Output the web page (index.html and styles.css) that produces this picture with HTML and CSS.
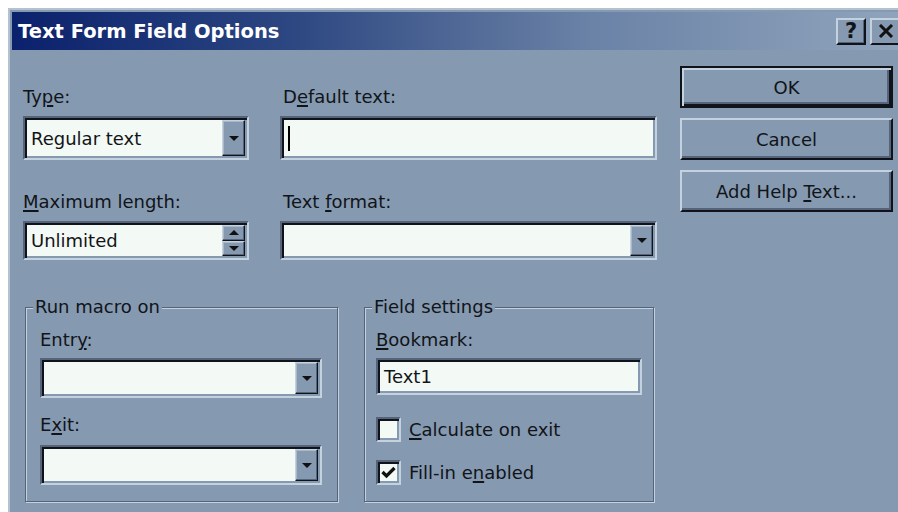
FILE: index.html
```html
<!DOCTYPE html>
<html lang="en">
<head>
<meta charset="utf-8">
<title>Text Form Field Options</title>
<link rel="stylesheet" href="styles.css">
</head>
<body>
<div class="dialog">
  <div class="titlebar">
    <span class="title">Text Form Field Options</span>
    <div class="caption-btns">
      <span class="cap-btn">?</span>
      <span class="cap-btn close">
        <svg width="16" height="14" viewBox="0 0 16 14"><path d="M2 1 L14 13 M14 1 L2 13" stroke="#111" stroke-width="3" fill="none"/></svg>
      </span>
    </div>
  </div>

  <div class="client">
    <div class="main">
      <div class="fields">
        <div class="field">
          <label class="lbl">Ty<u>p</u>e:</label>
          <div class="sunken row1">
            <span class="value">Regular text</span>
            <span class="drop-btn"><svg width="10" height="5" viewBox="0 0 10 5"><path d="M0 0 H10 L5 5 Z" fill="#111"/></svg></span>
          </div>
        </div>
        <div class="field">
          <label class="lbl shift">D<u>e</u>fault text:</label>
          <div class="sunken row1"><span class="caret"></span></div>
        </div>
        <div class="field">
          <label class="lbl"><u>M</u>aximum length:</label>
          <div class="sunken row2">
            <span class="value">Unlimited</span>
            <span class="spin">
              <span class="spin-half"><svg width="10" height="5" viewBox="0 0 10 5"><path d="M0 5 H10 L5 0 Z" fill="#111"/></svg></span>
              <span class="spin-half"><svg width="10" height="5" viewBox="0 0 10 5"><path d="M0 0 H10 L5 5 Z" fill="#111"/></svg></span>
            </span>
          </div>
        </div>
        <div class="field">
          <label class="lbl shift">Text <u>f</u>ormat:</label>
          <div class="sunken row2">
            <span class="value"></span>
            <span class="drop-btn"><svg width="10" height="5" viewBox="0 0 10 5"><path d="M0 0 H10 L5 5 Z" fill="#111"/></svg></span>
          </div>
        </div>
      </div>

      <div class="groups">
        <fieldset class="group macro">
          <legend>Run macro on</legend>
          <label class="lbl">Entr<u>y</u>:</label>
          <div class="sunken combo-g gap-s">
            <span class="value"></span>
            <span class="drop-btn"><svg width="10" height="5" viewBox="0 0 10 5"><path d="M0 0 H10 L5 5 Z" fill="#111"/></svg></span>
          </div>
          <label class="lbl gap-m">E<u>x</u>it:</label>
          <div class="sunken combo-g gap-x">
            <span class="value"></span>
            <span class="drop-btn"><svg width="10" height="5" viewBox="0 0 10 5"><path d="M0 0 H10 L5 5 Z" fill="#111"/></svg></span>
          </div>
        </fieldset>

        <fieldset class="group settings">
          <legend>Field settings</legend>
          <label class="lbl"><u>B</u>ookmark:</label>
          <div class="sunken edit-g gap-s"><span class="value">Text1</span></div>
          <div class="check-row gap-c1">
            <span class="sunken check"></span>
            <span><u>C</u>alculate on exit</span>
          </div>
          <div class="check-row gap-c2">
            <span class="sunken check">
              <svg width="15" height="13" viewBox="0 0 15 13"><path d="M1.5 6 L5.5 10 L13.5 2" stroke="#111" stroke-width="3.2" fill="none"/></svg>
            </span>
            <span>Fill-in e<u>n</u>abled</span>
          </div>
        </fieldset>
      </div>
    </div>

    <div class="buttons">
      <button class="btn default">OK</button>
      <button class="btn">Cancel</button>
      <button class="btn">Add Help <u>T</u>ext...</button>
    </div>
  </div>
</div>
</body>
</html>
```
FILE: styles.css
```css
:root {
  --face: #8599b1;
  --hi: #c4d1de;
  --light: #a9b8c8;
  --shadow: #55647a;
  --dkdk: #10141a;
  --field: #f3f9f4;
  --ink: #111418;
}

* { box-sizing: border-box; }

html, body {
  margin: 0;
  height: 100%;
  overflow: hidden;
  background: #fff;
}

body {
  font-family: "DejaVu Sans", Verdana, sans-serif;
  font-size: 18px;
  color: var(--ink);
}

u {
  text-decoration-thickness: 1.5px;
  text-underline-offset: 2px;
}

/* window frame */
.dialog {
  margin: 8px 0 0 8px;
  width: 890px;
  height: 504px;
  overflow: hidden;
  background: var(--face);
  border-top: 2px solid #b3c1d0;
  border-left: 2px solid #b3c1d0;
  padding: 2px 0 0 2px;
}

.titlebar {
  height: 38px;
  display: flex;
  align-items: center;
  padding: 0 0 0 6px;
  background: linear-gradient(90deg, #0b216c 0%, #2a4580 30%, #6a82a6 65%, #8fa4bc 100%);
}

.title {
  color: #fff;
  font-weight: bold;
  font-size: 19.5px;
}

.caption-btns {
  margin-left: auto;
  display: flex;
  gap: 4px;
}

.cap-btn {
  width: 30px;
  height: 27px;
  display: flex;
  align-items: center;
  justify-content: center;
  background: var(--face);
  border: 2px solid;
  border-color: var(--hi) var(--dkdk) var(--dkdk) var(--hi);
  box-shadow: inset -1px -1px 0 var(--shadow);
  font-weight: bold;
  font-size: 21px;
  color: var(--ink);
}

.cap-btn.close {
  width: 28px;
  border-right: none;
  box-shadow: none;
  padding-left: 2px;
}

/* client area */
.client {
  display: flex;
  gap: 23px;
  padding: 16px 0 0 11px;
}

.main {
  width: 634px;
  padding-top: 20px;
}

.fields {
  display: grid;
  grid-template-columns: 226px 377px;
  column-gap: 31px;
  row-gap: 31px;
}

.field {
  display: flex;
  flex-direction: column;
  gap: 8px;
}

.lbl {
  display: block;
  height: 22px;
  line-height: 22px;
  white-space: nowrap;
}

.lbl.shift { padding-left: 3px; }

/* sunken edit / combo boxes */
.sunken {
  background: var(--field);
  border: 2px solid;
  border-color: var(--shadow) var(--hi) var(--hi) var(--shadow);
  box-shadow: inset 2px 2px 0 var(--dkdk), inset -2px -2px 0 var(--face);
  padding: 2px;
  display: flex;
  align-items: stretch;
}

.row1 { height: 44px; }
.row2 { height: 39px; }

.value {
  flex: 1;
  display: flex;
  align-items: center;
  padding-left: 4px;
  white-space: nowrap;
}

.caret {
  width: 2px;
  height: 25px;
  background: #000;
  margin-left: 4px;
  align-self: center;
}

.drop-btn,
.spin-half {
  width: 23px;
  flex: none;
  display: flex;
  align-items: center;
  justify-content: center;
  background: var(--face);
  border: 1px solid;
  border-color: var(--hi) var(--dkdk) var(--dkdk) var(--hi);
  box-shadow: inset -1px -1px 0 var(--shadow), inset 1px 1px 0 var(--light);
}

.spin {
  width: 23px;
  display: flex;
  flex-direction: column;
}

.spin-half {
  flex: 1;
}

/* group boxes */
.groups {
  display: flex;
  align-items: flex-start;
  gap: 26px;
  margin: 36px 0 0 2px;
}

.group {
  margin: 0;
  min-width: 0;
  border: 1px solid var(--shadow);
  box-shadow: inset 1px 1px 0 var(--hi), 1px 1px 0 var(--hi);
  display: flex;
  flex-direction: column;
}

.group legend {
  padding: 0 2px;
  line-height: 22px;
  background: var(--face);
}

.macro {
  width: 313px;
  padding: 11px 15px 16px 14px;
}

.macro legend { margin-left: -7px; }

.settings {
  width: 290px;
  padding: 11px 11px 16px 11px;
}

.settings legend { margin-left: -4px; }

.combo-g { height: 40px; }
.edit-g { height: 37px; }

.gap-s { margin-top: 7px; }
.gap-m { margin-top: 16px; }
.gap-x { margin-top: 9px; }
.gap-c1 { margin-top: 22px; }
.gap-c2 { margin-top: 18px; }

.check-row {
  display: flex;
  align-items: center;
  gap: 8px;
  height: 25px;
  white-space: nowrap;
}

.check {
  width: 25px;
  height: 25px;
  flex: none;
  align-items: center;
  justify-content: center;
}

/* push buttons */
.buttons {
  width: 213px;
  display: flex;
  flex-direction: column;
  gap: 10px;
}

.btn {
  height: 42px;
  padding: 0;
  font: inherit;
  color: inherit;
  background: var(--face);
  border: 2px solid;
  border-color: var(--hi) var(--dkdk) var(--dkdk) var(--hi);
  box-shadow: inset -2px -2px 0 var(--shadow);
}

.btn.default {
  border-color: var(--dkdk);
  box-shadow: inset 2px 2px 0 var(--hi), inset -2px -2px 0 var(--dkdk), inset -4px -4px 0 var(--shadow);
}
```
